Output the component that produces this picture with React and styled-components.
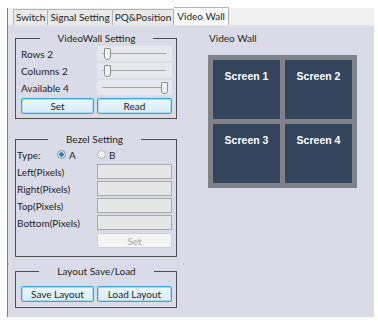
import styled, { createGlobalStyle } from "styled-components"

const GlobalStyle = createGlobalStyle`
  html, body {
    margin: 0;
    padding: 0;
    background: #ffffff;
  }
  body {
    font-family: "Lato", "Liberation Sans", sans-serif;
    font-size: 10px;
    color: #1e1e1e;
  }
`

const Window = styled.div`
  margin: 8px 0 0 7px;
  width: 366px;
  height: 309px;
  border-left: 1px solid #3b8fd1;
  display: flex;
  flex-direction: column;
  background: #d9dce6;
`

const TabBar = styled.div`
  height: 17px;
  background: #f0f0f0;
  display: flex;
  align-items: flex-end;
  padding-left: 5px;
  border-bottom: 1px solid #e2e4ea;
`

const Tab = styled.div`
  height: ${props => props.active ? "17px" : "15px"};
  line-height: ${props => props.active ? "17px" : "15px"};
  padding: 0 ${props => props.active ? 3 : 2}px;
  background: ${props => props.active ? "#fafafa" : "#e9e9e9"};
  border: 1px solid #b4b4b4;
  border-bottom: none;
  border-left: ${props => props.first ? "1px solid #b4b4b4" : "none"};
  white-space: nowrap;
`

const Content = styled.div`
  flex: 1;
  display: flex;
  padding: 0 0 0 7px;
  gap: 31px;
`

const LeftColumn = styled.div`
  width: 162px;
  display: flex;
  flex-direction: column;
`

const Group = styled.fieldset`
  margin: ${props => props.top}px 0 0 0;
  padding: 2px 4px ${props => props.bottom}px ${props => props.left || 5}px;
  border: 1px solid #4d4d4d;
  min-width: 0;
  display: flex;
  flex-direction: column;
  gap: ${props => props.gap}px;
`

const Legend = styled.legend`
  margin: 0 auto;
  padding: 0 18px;
  line-height: 12px;
`

const FieldRow = styled.div`
  display: grid;
  grid-template-columns: ${props => props.lw || 76}px 75px;
  height: ${props => props.h || 15}px;
  align-items: center;
`

const Label = styled.span`
  white-space: nowrap;
`

const SliderBox = styled.div`
  position: relative;
  height: 15px;
  background: #e6e8ed;
`

const Track = styled.div`
  position: absolute;
  left: 5px;
  right: 6px;
  top: 7px;
  height: 1px;
  background: #a3a3a3;
`

const Thumb = styled.div`
  position: absolute;
  top: 2px;
  width: 5px;
  height: 10px;
  margin-left: -3px;
  background: #f4f4f4;
  border: 1px solid #8e8e8e;
  border-radius: 1px 1px 3px 3px;
`

const ButtonRow = styled.div`
  display: grid;
  grid-template-columns: 73px 75px;
  gap: 3px;
  margin-top: ${props => props.mt || 0}px;
`

const Button = styled.button`
  height: 16px;
  padding: 0;
  font: inherit;
  color: #1e1e1e;
  border: 1px solid #3da3dc;
  border-radius: 2px;
  background: linear-gradient(#ecf7fd, #d5edf9);
  box-shadow: inset 0 0 0 1px #a8dcf5;
`

const DisabledButton = styled.button`
  grid-column: 2;
  height: 15px;
  padding: 0;
  font: inherit;
  color: #a8a8a8;
  border: 1px solid #cfcfcf;
  border-radius: 2px;
  background: #f4f4f4;
`

const Input = styled.div`
  height: 13px;
  background: #e6e6e6;
  border: 1px solid #a9a9a9;
`

const RadioGroup = styled.div`
  grid-column: 1 / -1;
  display: flex;
  align-items: center;
`

const RadioItem = styled.span`
  flex: none;
  display: flex;
  align-items: center;
  gap: 3px;
  width: ${props => props.w}px;
`

const RadioDot = styled.span`
  width: 7px;
  height: 7px;
  border-radius: 50%;
  border: 1px solid ${props => props.checked ? "#6c8fb0" : "#b0b0b0"};
  background: ${props => props.checked
    ? "radial-gradient(circle, #2a7fc4 0 2px, #e8eef4 2.5px)"
    : "#f2f2f2"};
`

const RightColumn = styled.div`
  display: flex;
  flex-direction: column;
  padding-top: 6px;
`

const PanelTitle = styled.div`
  padding-left: 1px;
  line-height: 12px;
`

const WallFrame = styled.div`
  margin-top: 11px;
  width: 139px;
  padding: 5px;
  display: grid;
  grid-template-columns: 67px 67px;
  grid-auto-rows: 59px;
  gap: 5px;
  background: #7f8289;
`

const Screen = styled.div`
  background: #36455e;
  color: #ffffff;
  font-family: "Liberation Sans", Arial, sans-serif;
  font-weight: bold;
  font-size: 10.5px;
  text-align: center;
  padding-top: 10px;
  box-sizing: border-box;
`

const sliders = [
  { label: "Rows 2", value: 0.08 },
  { label: "Columns 2", value: 0.08 },
  { label: "Available 4", value: 0.97 },
]

const bezels = ["Left(Pixels)", "Right(Pixels)", "Top(Pixels)", "Bottom(Pixels)"]

const Slider = ({ value }) => (
  <SliderBox>
    <Track />
    <Thumb style={{ left: `calc(5px + ${value} * (100% - 11px))` }} />
  </SliderBox>
)

const App = () => {
  return (
    <>
      <GlobalStyle />
      <Window>
        <TabBar>
          <Tab first>Switch</Tab>
          <Tab>Signal Setting</Tab>
          <Tab>PQ&amp;Position</Tab>
          <Tab active>Video Wall</Tab>
        </TabBar>
        <Content>
          <LeftColumn>
            <Group top={6} bottom={4} gap={2}>
              <Legend>VideoWall Setting</Legend>
              {sliders.map(s => (
                <FieldRow key={s.label}>
                  <Label>{s.label}</Label>
                  <Slider value={s.value} />
                </FieldRow>
              ))}
              <ButtonRow mt={1}>
                <Button>Set</Button>
                <Button>Read</Button>
              </ButtonRow>
            </Group>
            <Group top={14} bottom={7} gap={2} left={1}>
              <Legend>Bezel Setting</Legend>
              <FieldRow lw={80}>
                <RadioGroup>
                  <RadioItem w={40}>Type:</RadioItem>
                  <RadioItem w={40}><RadioDot checked />A</RadioItem>
                  <RadioItem w={30}><RadioDot />B</RadioItem>
                </RadioGroup>
              </FieldRow>
              {bezels.map(b => (
                <FieldRow key={b} lw={80}>
                  <Label>{b}</Label>
                  <Input />
                </FieldRow>
              ))}
              <FieldRow h={17} lw={80}>
                <DisabledButton>Set</DisabledButton>
              </FieldRow>
            </Group>
            <Group top={8} bottom={5} gap={0}>
              <Legend>Layout Save/Load</Legend>
              <ButtonRow mt={7}>
                <Button>Save Layout</Button>
                <Button>Load Layout</Button>
              </ButtonRow>
            </Group>
          </LeftColumn>
          <RightColumn>
            <PanelTitle>Video Wall</PanelTitle>
            <WallFrame>
              <Screen>Screen 1</Screen>
              <Screen>Screen 2</Screen>
              <Screen>Screen 3</Screen>
              <Screen>Screen 4</Screen>
            </WallFrame>
          </RightColumn>
        </Content>
      </Window>
    </>
  )
}

export default App
